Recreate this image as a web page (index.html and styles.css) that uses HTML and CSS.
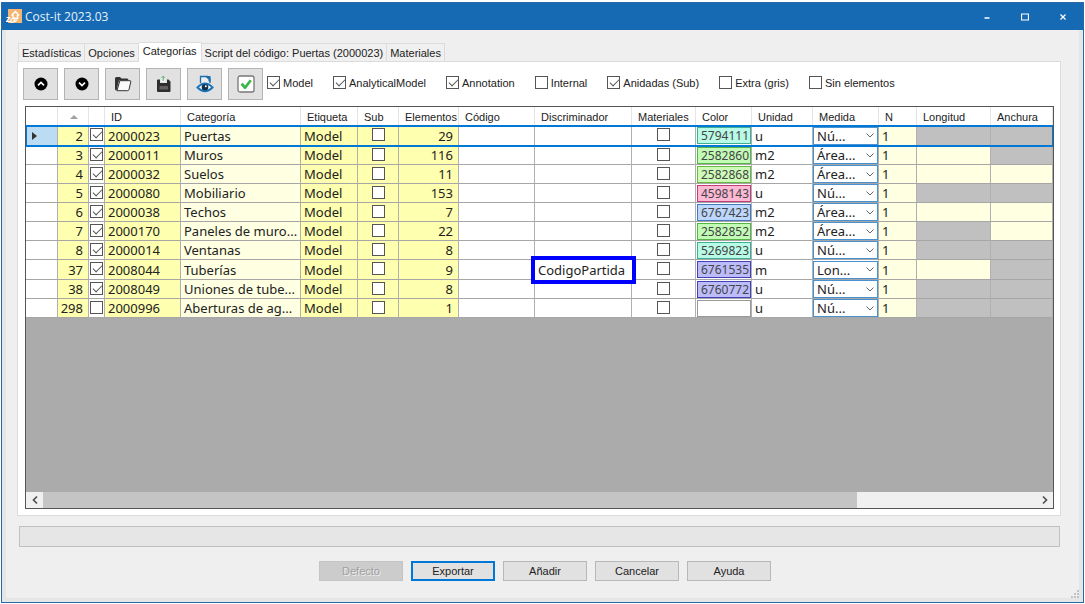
FILE: index.html
```html
<!DOCTYPE html>
<html lang="es">
<head>
    <meta charset="UTF-8">
    <meta name="viewport" content="width=device-width, initial-scale=1.0">
    <title>Cost-it 2023.03</title>
    <link rel="stylesheet" href="styles.css">
</head>
<body>
    <div class="window">
        <header class="titlebar">
            <svg class="app-icon" width="16" height="16" viewBox="0 0 16 16">
                <rect x="2" y="0" width="14" height="14" fill="#f6b673"/>
                <path d="M5.5 6.500 9.500 2.500 13 6.500M7 6v3.500h4.500V6" fill="none" stroke="#fff" stroke-width="1.500"/>
                <path d="M0.500 8.500h3l-3 4h3.500M5 13.500c3 0 4-2 3.500-5M5.500 9.500l-1 4M8 13l3-2" fill="none" stroke="#fff" stroke-width="1.200"/>
            </svg>
            <h1>Cost-it 2023.03</h1>
            <div class="window-buttons">
                <button type="button" aria-label="Minimizar"><svg width="8" height="8" viewBox="0 0 8 8"><path d="M1.500 5h5" stroke="#fff" stroke-width="1.500"/></svg></button>
                <button type="button" aria-label="Maximizar"><svg width="8" height="8" viewBox="0 0 8 8"><path d="M.5 1h7v6h-7z" fill="none" stroke="#fff" stroke-width="1.200"/></svg></button>
                <button type="button" aria-label="Cerrar"><svg width="8" height="8" viewBox="0 0 8 8"><path d="M1.500 1.500l5 5M6.500 1.500l-5 5" stroke="#fff" stroke-width="1.200"/></svg></button>
            </div>
        </header>

        <main class="content">
            <nav class="tabs">
                <button type="button">Estadísticas</button>
                <button type="button">Opciones</button>
                <button type="button" class="active">Categorías</button>
                <button type="button">Script del código: Puertas (2000023)</button>
                <button type="button">Materiales</button>
            </nav>

            <section class="panel">
                <div class="toolbar">
                    <div class="tools">
                        <button type="button" aria-label="Subir">
                            <svg width="14" height="14" viewBox="0 0 14 14"><circle cx="7" cy="7" r="6.500" fill="#000"/><path d="M4 8.300 7 5.500l3 2.800" fill="none" stroke="#fff" stroke-width="1.700"/></svg>
                        </button>
                        <button type="button" aria-label="Bajar">
                            <svg width="14" height="14" viewBox="0 0 14 14"><circle cx="7" cy="7" r="6.500" fill="#000"/><path d="M4 5.700 7 8.500l3-2.800" fill="none" stroke="#fff" stroke-width="1.700"/></svg>
                        </button>
                        <button type="button" aria-label="Abrir">
                            <svg width="18" height="16" viewBox="0 0 18 16"><path d="M1 13V2.500q0-1.500 1.500-1.500h3.500l1.500 1.500H13q1.500 0 1.500 2H5L2.500 14.500Q1 14.500 1 13z" fill="#333"/><path d="M5.800 4.700H16q1 0 .8 1l-1.800 7.800q-.3 1.200-1.400 1.200H3z" fill="#fafafa" stroke="#333" stroke-width="1"/></svg>
                        </button>
                        <button type="button" aria-label="Guardar">
                            <svg width="16" height="18" viewBox="0 0 16 18"><path d="M1 5.500Q1 4.500 2 4.500H4V8h7V4.500h1.500L14.500 6.500V16q0 1-1 1H2q-1 0-1-1z" fill="#2e2e2e"/><path d="M5 4.500h4.500V7H5z" fill="#f2f2f2"/><path d="M7.200 1v5M5.700 2.700l1.500-1.500 1.500 1.500" fill="none" stroke="#55b56a" stroke-width="1"/><path d="M3.500 11h8.500v3.500H3.500z" fill="#606060"/></svg>
                        </button>
                        <button type="button" aria-label="Ver">
                            <svg width="18" height="18" viewBox="0 0 18 18"><path d="M4.500 8V1.500h7l2.500 2.500v4" fill="#eee" stroke="#1b6fae" stroke-width="1.300"/><path d="M8.500 1H14.500v5.500h-2V4.500z" fill="#1b6fae"/><path d="M1.500 12.500Q9 4.500 16.500 12.500 9 20 1.500 12.500z" fill="#fff" stroke="#1b75bb" stroke-width="2"/><circle cx="9" cy="12.300" r="3.300" fill="#12304a"/><circle cx="9.800" cy="11.300" r="1" fill="#fff"/></svg>
                        </button>
                        <button type="button" aria-label="Validar">
                            <svg width="18" height="18" viewBox="0 0 18 18"><rect x="1" y="1" width="16" height="16" rx="2" fill="#fff" stroke="#777" stroke-width="1.300"/><path d="M3.500 9.500 5.800 7.800 8 10.500 12.800 4.500l2 1.500L8.800 14H7.300z" fill="#39b54a"/></svg>
                        </button>
                    </div>
                    <div class="filters">
                        <label><input type="checkbox" checked>Model</label>
                        <label><input type="checkbox" checked>AnalyticalModel</label>
                        <label><input type="checkbox" checked>Annotation</label>
                        <label><input type="checkbox">Internal</label>
                        <label><input type="checkbox" checked>Anidadas (Sub)</label>
                        <label><input type="checkbox">Extra (gris)</label>
                        <label><input type="checkbox">Sin elementos</label>
                    </div>
                </div>

                <div class="grid">
                    <table>
                        <colgroup>
                            <col class="c-head"><col class="c-order"><col class="c-check"><col class="c-id"><col class="c-category"><col class="c-tag"><col class="c-sub"><col class="c-count"><col class="c-code"><col class="c-disc"><col class="c-mat"><col class="c-color"><col class="c-unit"><col class="c-measure"><col class="c-n"><col class="c-length"><col>
                        </colgroup>
                        <thead>
                            <tr>
                                <th></th>
                                <th class="sort"><svg width="8" height="4" viewBox="0 0 8 4"><path d="M0 4 4 0l4 4z" fill="#a0a0a0"/></svg></th>
                                <th></th>
                                <th>ID</th>
                                <th>Categoría</th>
                                <th>Etiqueta</th>
                                <th>Sub</th>
                                <th>Elementos</th>
                                <th>Código</th>
                                <th>Discriminador</th>
                                <th>Materiales</th>
                                <th>Color</th>
                                <th>Unidad</th>
                                <th>Medida</th>
                                <th>N</th>
                                <th>Longitud</th>
                                <th>Anchura</th>
                            </tr>
                        </thead>
                        <tbody id="rows"></tbody>
                    </table>
                    <div class="scrollbar">
                        <button type="button" aria-label="Izquierda"><svg width="8" height="10" viewBox="0 0 8 10"><path d="M6 1.500 2.500 5 6 8.500" fill="none" stroke="#505050" stroke-width="1.700"/></svg></button>
                        <div class="track"><div class="thumb"></div></div>
                        <button type="button" aria-label="Derecha"><svg width="8" height="10" viewBox="0 0 8 10"><path d="M2 1.500 5.500 5 2 8.500" fill="none" stroke="#505050" stroke-width="1.700"/></svg></button>
                    </div>
                </div>
            </section>

            <progress class="progress" value="0" max="100" aria-label="Progreso"></progress>

            <footer class="actions">
                <button type="button" disabled>Defecto</button>
                <button type="button" class="default">Exportar</button>
                <button type="button">Añadir</button>
                <button type="button">Cancelar</button>
                <button type="button">Ayuda</button>
            </footer>
            <svg class="grip" width="8" height="8" viewBox="0 0 8 8"><path d="M6 0h2v2H6zM3 3h2v2H3zM6 3h2v2H6zM0 6h2v2H0zM3 6h2v2H3zM6 6h2v2H6z" fill="#c2c2c2"/></svg>
        </main>
    </div>

    <script src="script.js"></script>
</body>
</html>
```

FILE: styles.css
```css
* {
    box-sizing: border-box;
}
body {
    margin: 0;
    background-color: #fff;
    color: #222;
    font-family: "Liberation Sans", Arial, sans-serif;
    font-size: 11px;
}
button {
    padding: 0;
    font: inherit;
    color: inherit;
}
svg {
    display: block;
}
.window {
    display: flex;
    flex-direction: column;
    min-height: calc(100vh - 3px);
    margin: 2px 1px 1px;
    border: 1px solid #2868a3;
}

/* title bar */
.titlebar {
    display: flex;
    align-items: center;
    height: 27px;
    padding: 0 8px 0 4px;
    background-color: #156ab3;
    color: #e8f1f9;
}
.titlebar h1 {
    flex: 1;
    margin: 0 0 0 3px;
    font-family: "Open Sans", "Noto Sans", sans-serif;
    font-size: 12px;
    font-weight: normal;
}
.window-buttons {
    display: flex;
    gap: 14px;
}
.window-buttons button {
    display: flex;
    justify-content: center;
    width: 24px;
    border: none;
    background: none;
}

/* content */
.content {
    position: relative;
    display: flex;
    flex: 1;
    flex-direction: column;
    padding: 12px 18px 17px 11px;
    border: 4px solid #e6e6e6;
    border-top: none;
    background-color: #efefef;
}
.tabs {
    display: flex;
    align-items: flex-end;
    padding-left: 1px;
}
.tabs button {
    height: 18px;
    padding: 0 3px;
    border: 1px solid #dcdcdc;
    border-width: 1px 1px 0 0;
    background-color: #f0f0f0;
}
.tabs button:first-child {
    border-left-width: 1px;
}
.tabs .active {
    height: 20px;
    margin-bottom: -1px;
    padding: 0 4px 4px;
    background-color: #fff;
    z-index: 1;
}
.panel {
    display: flex;
    flex: 1;
    flex-direction: column;
    padding: 6px 6px 6px 7px;
    border: 1px solid #dcdcdc;
    background-color: #fff;
}

/* toolbar */
.toolbar {
    display: flex;
    gap: 4px;
    margin-bottom: 6px;
}
.tools {
    display: flex;
    gap: 6px;
    margin-left: -2px;
}
.tools button {
    display: flex;
    align-items: center;
    justify-content: center;
    width: 35px;
    height: 32px;
    border: 1px solid #b4b4b4;
    background-color: #e1e1e1;
}
.filters {
    display: flex;
    gap: 20px;
    height: 29px;
}
.filters label {
    display: flex;
    align-items: center;
    gap: 3px;
}
input[type="checkbox"] {
    appearance: none;
    flex: none;
    width: 13px;
    height: 13px;
    margin: 0;
    border: 1px solid #555;
    background-color: #fff;
}
input[type="checkbox"]:checked::before {
    content: "";
    display: block;
    width: 8px;
    height: 4px;
    margin: 2px 0 0 2px;
    border: solid #555;
    border-width: 0 0 1px 1px;
    transform: rotate(-45deg);
}

/* data grid */
.grid {
    display: flex;
    flex: 1;
    flex-direction: column;
    justify-content: space-between;
    overflow: hidden;
    border: 1px solid #555;
    background-color: #ababab;
}
table {
    width: 100%;
    table-layout: fixed;
    border-collapse: separate;
    border-spacing: 0;
}
.c-head { width: 32px; }
.c-order { width: 31px; }
.c-check { width: 16px; }
.c-id { width: 76px; }
.c-category { width: 120px; }
.c-tag { width: 57px; }
.c-sub { width: 41px; }
.c-count { width: 60px; }
.c-code { width: 76px; }
.c-disc { width: 97px; }
.c-mat { width: 64px; }
.c-color { width: 56px; }
.c-unit { width: 61px; }
.c-measure { width: 66px; }
.c-n { width: 38px; }
.c-length { width: 74px; }
th {
    height: 19px;
    padding: 0 0 0 6px;
    border-right: 1px solid #e5e5e5;
    background-color: #fff;
    font-weight: normal;
    text-align: left;
    white-space: nowrap;
}
.sort svg {
    margin-left: 6px;
}
td {
    height: 19px;
    padding: 0 0 0 3px;
    border-right: 1px solid #b0b0b0;
    border-bottom: 1px solid #a6a6a6;
    background-color: #fff;
    font-family: "Noto Sans", "Open Sans", sans-serif;
    font-size: 13px;
    line-height: 16px;
    white-space: nowrap;
}
td input[type="checkbox"] {
    display: block;
    margin: 0 auto 2px;
}
.yellow {
    background-color: #ffffb0;
}
.cream {
    background-color: #ffffe1;
}
.gray {
    background-color: #c0c0c0;
}
.number {
    padding: 0 5px 0 0;
    text-align: right;
}
.check {
    padding: 0;
}
.row-head {
    padding-left: 6px;
}
.current {
    height: 20px;
    outline: 2px solid #0078d7;
    outline-offset: -1px;
}
.current .row-head {
    background-color: #bcdcf4;
}
.marked {
    height: 20px;
}
.marked .disc {
    outline: 4px solid #0000ff;
    border-color: transparent;
}
.swatch-cell {
    padding: 0 0 0 1px;
}
.swatch {
    display: block;
    height: 17px;
    padding-left: 3px;
    border: 1px solid #999;
    color: #444;
    font-size: 12px;
    line-height: 15px;
}
.teal { background-color: #b8fbe6; border-color: #3fae92; }
.green { background-color: #c1fbb6; border-color: #55b645; }
.lime { background-color: #cdfcb8; border-color: #6ab945; }
.pink { background-color: #fcb8d5; border-color: #c23c78; }
.blue { background-color: #bcd6fc; border-color: #4779c0; }
.violet { background-color: #bcbcfb; border-color: #4640b5; }
.measure {
    padding: 0;
}
.measure-box {
    display: grid;
    align-items: center;
    height: 18px;
}
.measure-box select,
.measure-box svg {
    grid-area: 1 / 1;
}
.measure-box svg {
    justify-self: end;
    margin-right: 4px;
    pointer-events: none;
}
select {
    appearance: none;
    width: 100%;
    height: 18px;
    padding: 0 0 0 3px;
    border: 1px solid #4a92cf;
    border-radius: 0;
    background-color: #fff;
    color: #222;
    font: inherit;
}

/* horizontal scrollbar */
.scrollbar {
    display: flex;
    height: 16px;
    background-color: #f0f0f0;
}
.scrollbar button {
    display: flex;
    align-items: center;
    justify-content: center;
    width: 17px;
    border: none;
    background: none;
}
.track {
    flex: 1;
}
.thumb {
    width: 82%;
    height: 100%;
    background-color: #c4c4c4;
}

/* bottom */
.progress {
    appearance: none;
    width: auto;
    height: 21px;
    margin: 10px 1px 14px 2px;
    border: 1px solid #c0c0c0;
    background-color: #e6e6e6;
}
.progress::-webkit-progress-bar {
    background-color: #e6e6e6;
}
.actions {
    display: flex;
    justify-content: center;
    gap: 8px;
    padding-left: 12px;
}
.actions button {
    width: 84px;
    height: 20px;
    border: 1px solid #b8b8b8;
    background-color: #e1e1e1;
}
.actions .default {
    border: 2px solid #0078d7;
}
.actions button:disabled {
    border-color: #c4c4c4;
    background-color: #cccccc;
    color: #a0a0a0;
    text-shadow: 1px 1px #eee;
}
.grip {
    position: absolute;
    right: 0;
    bottom: 0;
}
```

FILE: script.js
```js
// order, checked, id, category, elements, discriminator, color, color class, unit, measure, length, width
const rows = [
    [2, true, '2000023', 'Puertas', 29, '', '5794111', 'teal', 'u', 'Nú...', 'gray', 'gray'],
    [3, true, '2000011', 'Muros', 116, '', '2582860', 'green', 'm2', 'Área...', 'cream', 'gray'],
    [4, true, '2000032', 'Suelos', 11, '', '2582868', 'lime', 'm2', 'Área...', 'cream', 'cream'],
    [5, true, '2000080', 'Mobiliario', 153, '', '4598143', 'pink', 'u', 'Nú...', 'gray', 'gray'],
    [6, true, '2000038', 'Techos', 7, '', '6767423', 'blue', 'm2', 'Área...', 'cream', 'cream'],
    [7, true, '2000170', 'Paneles de muro...', 22, '', '2582852', 'green', 'm2', 'Área...', 'gray', 'cream'],
    [8, true, '2000014', 'Ventanas', 8, '', '5269823', 'teal', 'u', 'Nú...', 'gray', 'gray'],
    [37, true, '2008044', 'Tuberías', 9, 'CodigoPartida', '6761535', 'violet', 'm', 'Lon...', 'cream', 'gray'],
    [38, true, '2008049', 'Uniones de tube...', 8, '', '6760772', 'violet', 'u', 'Nú...', 'gray', 'gray'],
    [298, false, '2000996', 'Aberturas de ag...', 1, '', '', '', 'u', 'Nú...', 'gray', 'gray']
];

document.getElementById('rows').innerHTML = rows.map((row, i) => {
    const [order, checked, id, category, elements, disc, color, colorClass, unit, measure, length, width] = row;
    const rowClass = i === 0 ? 'current' : disc ? 'marked' : '';
    const arrow = i === 0 ? '<svg width="5" height="8" viewBox="0 0 5 8"><path d="M0 0l5 4-5 4z" fill="#333"/></svg>' : '';
    return `<tr class="${rowClass}">
        <td class="row-head">${arrow}</td>
        <td class="yellow number">${order}</td>
        <td class="check"><input type="checkbox" aria-label="Exportar ${category}" ${checked ? 'checked' : ''}></td>
        <td class="yellow">${id}</td>
        <td class="cream">${category}</td>
        <td class="yellow">Model</td>
        <td class="yellow check"><input type="checkbox" aria-label="Sub ${category}"></td>
        <td class="yellow number">${elements}</td>
        <td></td>
        <td class="disc">${disc}</td>
        <td class="check"><input type="checkbox" aria-label="Materiales ${category}"></td>
        <td class="swatch-cell"><span class="swatch ${colorClass}">${color}</span></td>
        <td>${unit}</td>
        <td class="measure"><div class="measure-box">
            <select aria-label="Medida ${category}"><option>${measure}</option></select>
            <svg width="8" height="5" viewBox="0 0 8 5"><path d="M.5.500 4 4 7.500.500" fill="none" stroke="#666"/></svg>
        </div></td>
        <td class="cream">1</td>
        <td class="${length}"></td>
        <td class="${width}"></td>
    </tr>`;
}).join('');
```
